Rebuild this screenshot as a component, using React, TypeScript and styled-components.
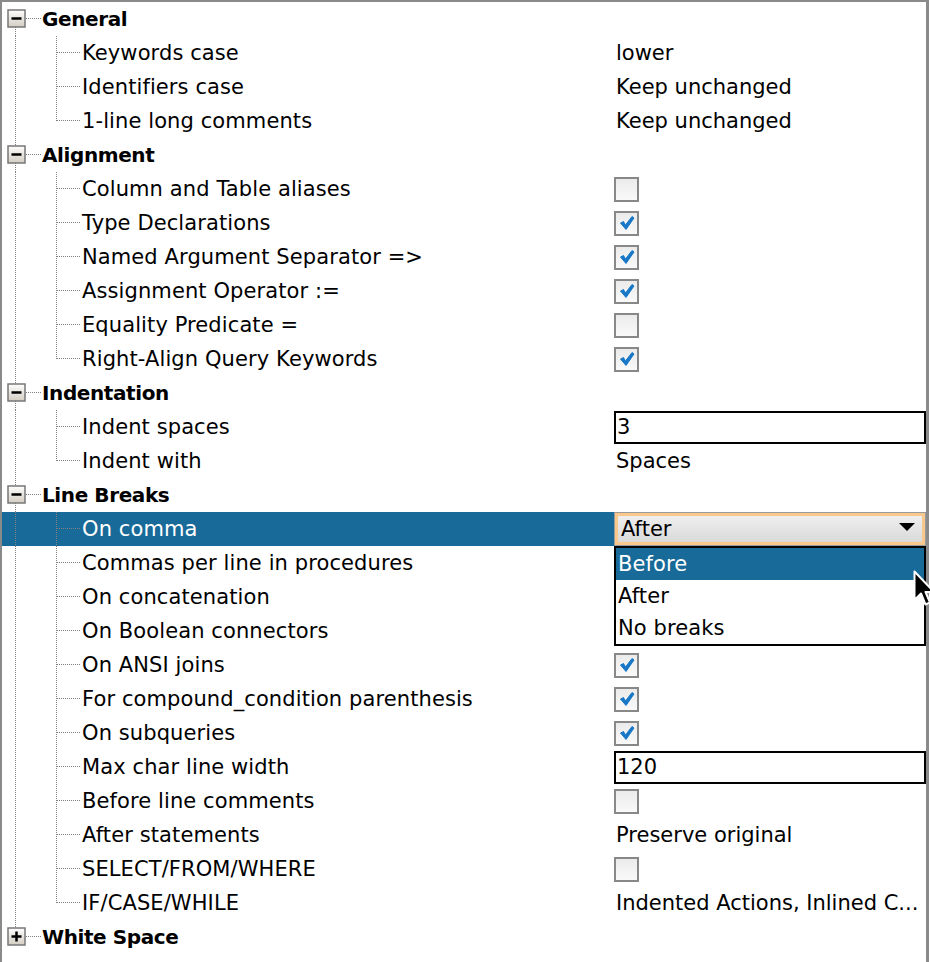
import React from 'react';
import styled, { createGlobalStyle } from 'styled-components';

const GlobalStyle = createGlobalStyle`
  html, body {
    margin: 0;
    padding: 0;
    background: #ffffff;
  }
  body {
    font-family: "DejaVu Sans", "Liberation Sans", sans-serif;
    color: #000;
  }
`;

const Panel = styled.div`
  width: 929px;
  height: 962px;
  box-sizing: border-box;
  border-top: 2px solid #8a8a8a;
  border-left: 2px solid #8a8a8a;
  border-right: 3px solid #8a8a8a;
  background: #fff;
  overflow: visible;
`;

const Row = styled.div<{ $selected?: boolean }>`
  display: grid;
  grid-template-columns: 612px 312px;
  height: 34px;
  background: ${p => (p.$selected ? '#186a98' : 'transparent')};
  color: ${p => (p.$selected ? '#fff' : '#000')};
`;

const LabelCell = styled.div`
  display: flex;
  align-items: center;
  height: 34px;
`;

const Label = styled.span<{ $group?: boolean }>`
  font-size: ${p => (p.$group ? '20px' : '21px')};
  font-weight: ${p => (p.$group ? 700 : 400)};
  letter-spacing: ${p => (p.$group ? '-0.4px' : '0.1px')};
  line-height: 34px;
  white-space: nowrap;
`;

const ValueCell = styled.div`
  position: relative;
  display: flex;
  align-items: center;
  height: 34px;
`;

const ValueText = styled.span`
  font-size: 21px;
  line-height: 34px;
  padding-left: 2px;
  white-space: nowrap;
  color: #000;
`;

const CheckBox = styled.div`
  width: 25px;
  height: 25px;
  box-sizing: border-box;
  border: 2px solid #888;
  background: linear-gradient(#ebebeb, #f9f9f9);
  display: flex;
  align-items: center;
  justify-content: center;
`;

const TextField = styled.div`
  width: 312px;
  height: 33px;
  box-sizing: border-box;
  border: 2px solid #000;
  background: #fff;
  font-size: 21px;
  line-height: 29px;
  padding-left: 1px;
`;

const Combo = styled.div`
  width: 312px;
  height: 34px;
  box-sizing: border-box;
  border: 1px solid #9a9a9a;
  box-shadow: inset 0 0 0 3px #f8c88d;
  background: linear-gradient(#f1f1f1, #d7d7d7);
  display: flex;
  align-items: center;
  justify-content: space-between;
  padding: 0 10px 0 6px;
  font-size: 21px;
  color: #000;
`;

const Arrow = styled.div`
  width: 0;
  height: 0;
  border-left: 8px solid transparent;
  border-right: 8px solid transparent;
  border-top: 8px solid #000;
  margin-top: -4px;
`;

const Popup = styled.div`
  position: absolute;
  left: 0;
  top: 34px;
  width: 312px;
  box-sizing: border-box;
  border: 2px solid #000;
  background: #fff;
  z-index: 5;
`;

const PopupItem = styled.div<{ $active?: boolean }>`
  height: 32px;
  line-height: 32px;
  padding-left: 2px;
  font-size: 21px;
  letter-spacing: 0.1px;
  background: ${p => (p.$active ? '#186a98' : '#fff')};
  color: ${p => (p.$active ? '#fff' : '#000')};
`;

const Cursor = styled.svg`
  position: absolute;
  left: 297px;
  top: 22px;
  z-index: 10;
`;

type Value =
  | { kind: 'text'; text: string }
  | { kind: 'check'; on: boolean }
  | { kind: 'field'; text: string }
  | { kind: 'combo'; text: string }
  | { kind: 'none' };

interface Item {
  label: string;
  group?: boolean;
  expanded?: boolean;
  first?: boolean;
  last?: boolean;
  selected?: boolean;
  value?: Value;
}

const items: Item[] = [
  { label: 'General', group: true, expanded: true, first: true },
  { label: 'Keywords case', value: { kind: 'text', text: 'lower' } },
  { label: 'Identifiers case', value: { kind: 'text', text: 'Keep unchanged' } },
  { label: '1-line long comments', value: { kind: 'text', text: 'Keep unchanged' }, last: true },
  { label: 'Alignment', group: true, expanded: true },
  { label: 'Column and Table aliases', value: { kind: 'check', on: false } },
  { label: 'Type Declarations', value: { kind: 'check', on: true } },
  { label: 'Named Argument Separator =>', value: { kind: 'check', on: true } },
  { label: 'Assignment Operator :=', value: { kind: 'check', on: true } },
  { label: 'Equality Predicate =', value: { kind: 'check', on: false } },
  { label: 'Right-Align Query Keywords', value: { kind: 'check', on: true }, last: true },
  { label: 'Indentation', group: true, expanded: true },
  { label: 'Indent spaces', value: { kind: 'field', text: '3' } },
  { label: 'Indent with', value: { kind: 'text', text: 'Spaces' }, last: true },
  { label: 'Line Breaks', group: true, expanded: true },
  { label: 'On comma', value: { kind: 'combo', text: 'After' }, selected: true },
  { label: 'Commas per line in procedures', value: { kind: 'none' } },
  { label: 'On concatenation', value: { kind: 'none' } },
  { label: 'On Boolean connectors', value: { kind: 'none' } },
  { label: 'On ANSI joins', value: { kind: 'check', on: true } },
  { label: 'For compound_condition parenthesis', value: { kind: 'check', on: true } },
  { label: 'On subqueries', value: { kind: 'check', on: true } },
  { label: 'Max char line width', value: { kind: 'field', text: '120' } },
  { label: 'Before line comments', value: { kind: 'check', on: false } },
  { label: 'After statements', value: { kind: 'text', text: 'Preserve original' } },
  { label: 'SELECT/FROM/WHERE', value: { kind: 'check', on: false } },
  { label: 'IF/CASE/WHILE', value: { kind: 'text', text: 'Indented Actions, Inlined C...' }, last: true },
  { label: 'White Space', group: true, expanded: false, last: true },
];

const DOT = '#7f7f7f';

const Dotted = ({ x1, y1, x2, y2 }: { x1: number; y1: number; x2: number; y2: number }) => (
  <line x1={x1} y1={y1} x2={x2} y2={y2} stroke={DOT} strokeWidth={1} strokeDasharray="1 1" />
);

const GroupGuides = ({ item }: { item: Item }) => (
  <svg width={40} height={34} style={{ flex: 'none' }}>
    <defs>
      <linearGradient id="exp" x1="0" y1="0" x2="0" y2="1">
        <stop offset="0" stopColor="#ffffff" />
        <stop offset="1" stopColor="#d3cdc2" />
      </linearGradient>
    </defs>
    {!item.first && <Dotted x1={13.5} y1={0} x2={13.5} y2={8} />}
    {!item.last && <Dotted x1={13.5} y1={25} x2={13.5} y2={34} />}
    <Dotted x1={24} y1={16.5} x2={39} y2={16.5} />
    <rect x={6} y={8} width={17} height={17} fill="url(#exp)" stroke="#777" strokeWidth={1.5} />
    <line x1={9.5} y1={16.5} x2={19.5} y2={16.5} stroke="#000" strokeWidth={2.5} />
    {!item.expanded && <line x1={14.5} y1={11.5} x2={14.5} y2={21.5} stroke="#000" strokeWidth={2.5} />}
  </svg>
);

const ChildGuides = ({ item }: { item: Item }) => (
  <svg width={80} height={34} style={{ flex: 'none' }}>
    <Dotted x1={13.5} y1={0} x2={13.5} y2={34} />
    <Dotted x1={54.5} y1={0} x2={54.5} y2={item.last ? 17 : 34} />
    <Dotted x1={55} y1={16.5} x2={79} y2={16.5} />
  </svg>
);

const Check = () => (
  <svg width={18} height={18} viewBox="0 0 18 18">
    <path
      d="M2.5 9 L5.5 7.5 L7.5 11 L14 2.5 L16 4 L8 15.5 Z"
      fill="#1877c6"
      stroke="#1877c6"
      strokeWidth={1}
      strokeLinejoin="round"
    />
  </svg>
);

const renderValue = (v?: Value) => {
  if (!v) return null;
  switch (v.kind) {
    case 'text':
      return <ValueText>{v.text}</ValueText>;
    case 'check':
      return <CheckBox>{v.on && <Check />}</CheckBox>;
    case 'field':
      return <TextField>{v.text}</TextField>;
    case 'combo':
      return (
        <>
          <Combo>
            <span>{v.text}</span>
            <Arrow />
          </Combo>
          <Popup>
            <PopupItem $active>Before</PopupItem>
            <PopupItem>After</PopupItem>
            <PopupItem>No breaks</PopupItem>
            <Cursor width={24} height={38} viewBox="0 0 24 38">
              <path
                d="M1.5 1.5 L1.5 30 L8 23.5 L12.5 34.5 L17 32.5 L12.5 22 L21 22 Z"
                fill="#000"
                stroke="#fff"
                strokeWidth={2}
                strokeLinejoin="round"
              />
            </Cursor>
          </Popup>
        </>
      );
    default:
      return null;
  }
};

export default function App() {
  return (
    <>
      <GlobalStyle />
      <Panel>
        {items.map((item, i) => (
          <Row key={i} $selected={item.selected}>
            <LabelCell>
              {item.group ? <GroupGuides item={item} /> : <ChildGuides item={item} />}
              <Label $group={item.group}>{item.label}</Label>
            </LabelCell>
            <ValueCell>{renderValue(item.value)}</ValueCell>
          </Row>
        ))}
      </Panel>
    </>
  );
}
